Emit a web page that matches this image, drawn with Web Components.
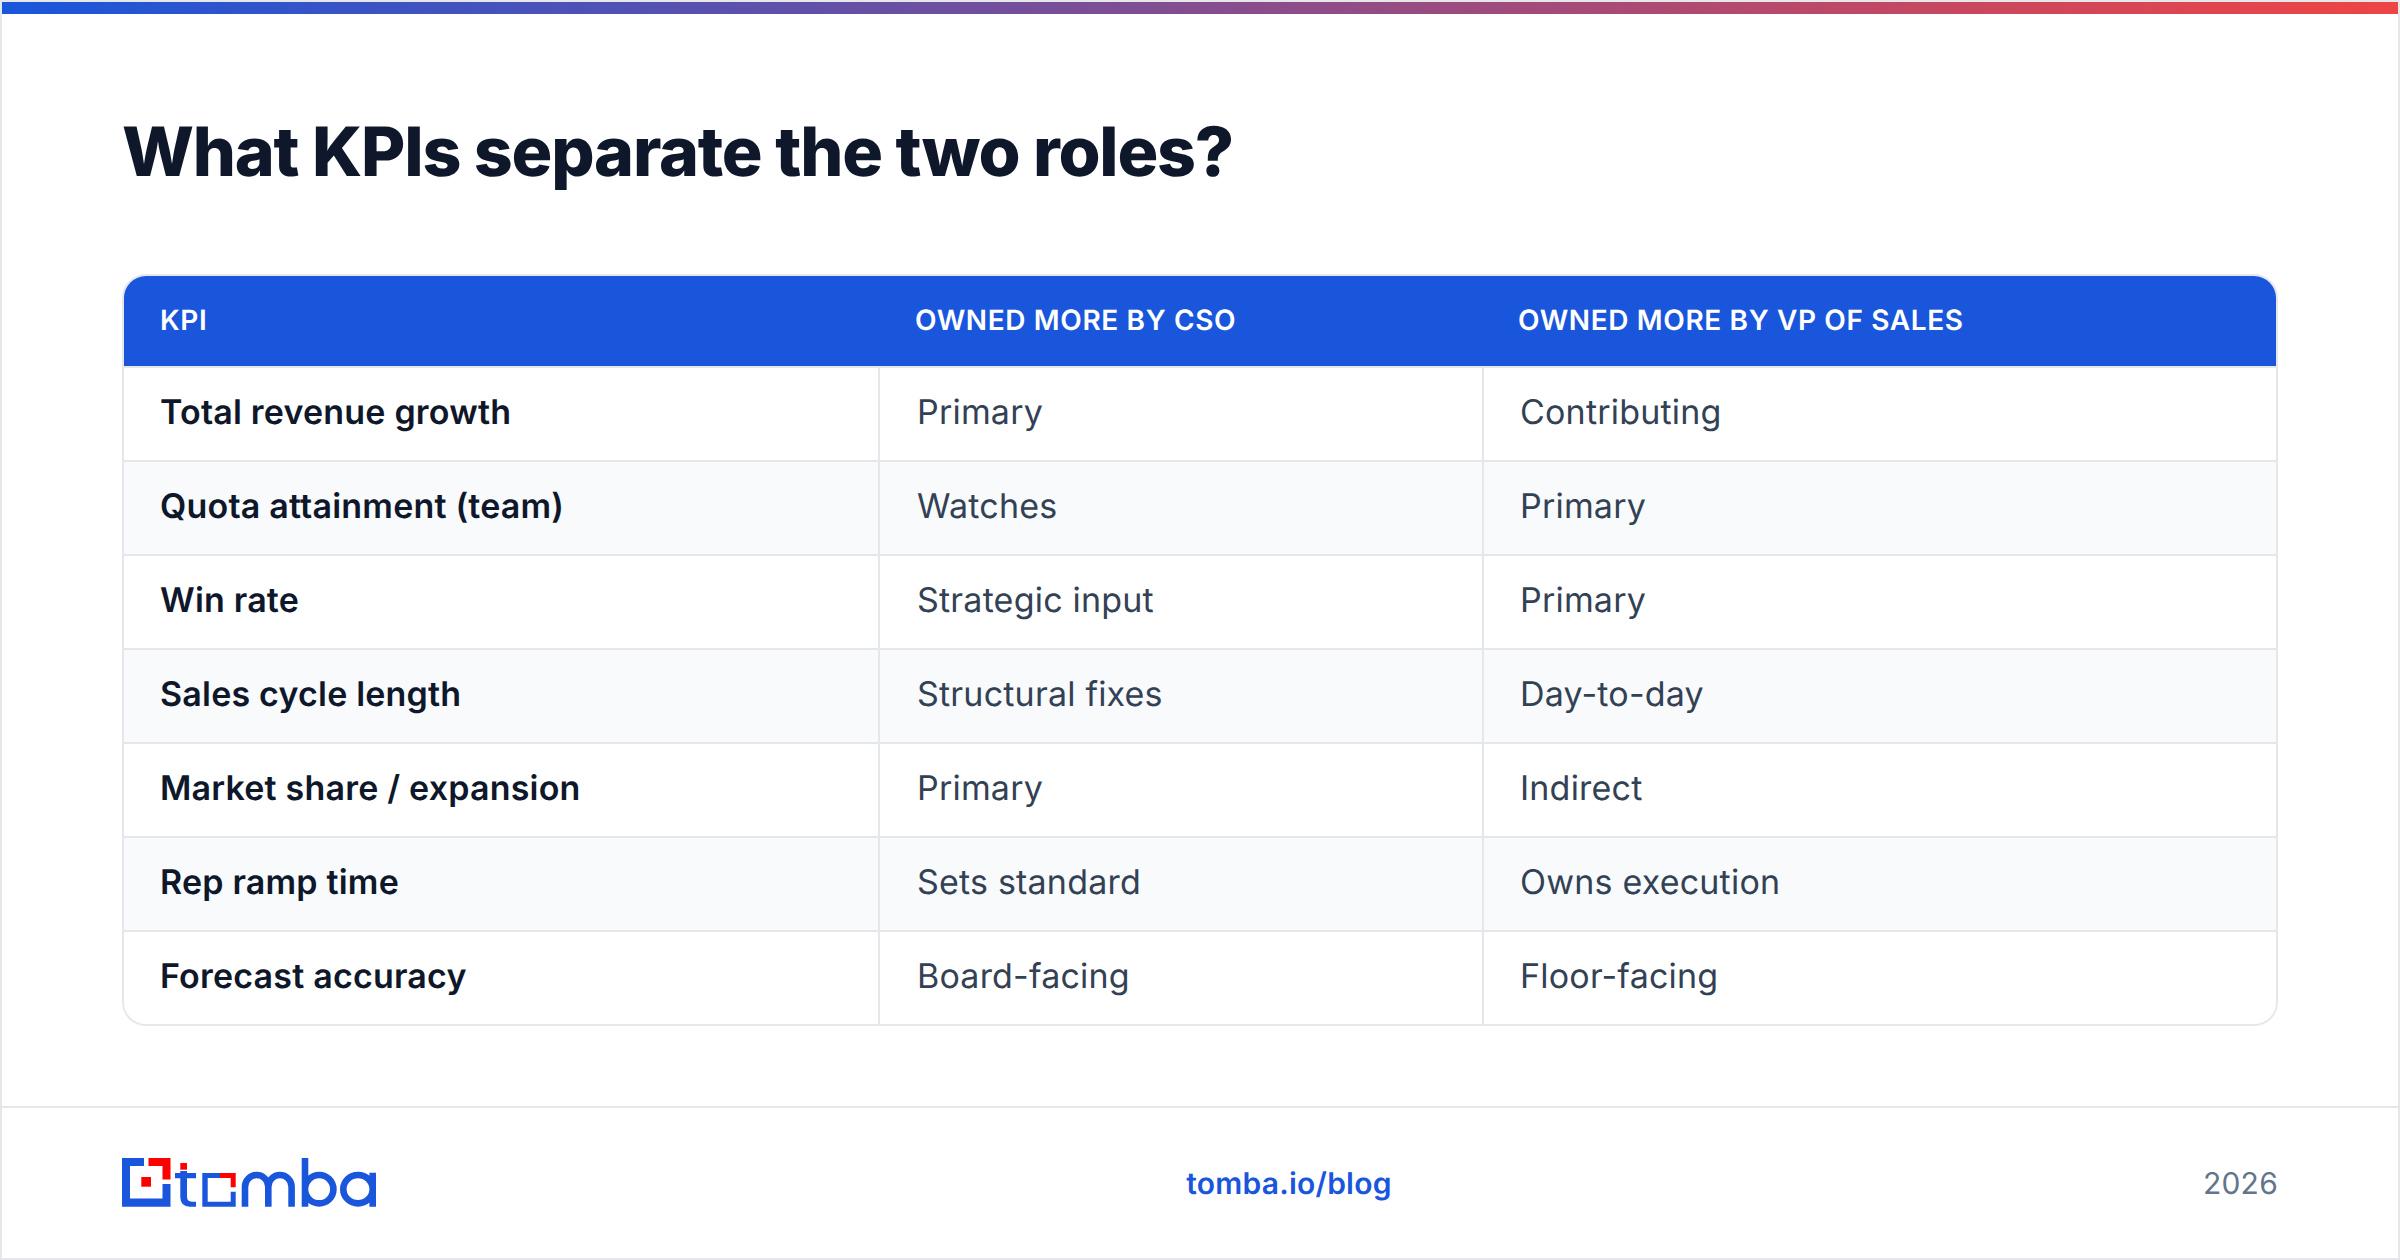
<!DOCTYPE html>
<html>
<head>
<meta charset="utf-8">
<title>KPIs</title>
<style>
	html, body { margin: 0; padding: 0; background: #fff; }
	body { font-family: Inter, "Liberation Sans", sans-serif; text-rendering: geometricPrecision; }
</style>
</head>
<body>

<kpi-slide>
	<h-title slot="title">What KPIs separate the two roles?</h-title>
	<kpi-table>
		<kpi-head><span>KPI</span><span>OWNED MORE BY CSO</span><span>OWNED MORE BY VP OF SALES</span></kpi-head>
		<kpi-row><span>Total revenue growth</span><span>Primary</span><span>Contributing</span></kpi-row>
		<kpi-row alt><span>Quota attainment (team)</span><span>Watches</span><span>Primary</span></kpi-row>
		<kpi-row><span>Win rate</span><span>Strategic input</span><span>Primary</span></kpi-row>
		<kpi-row alt><span>Sales cycle length</span><span>Structural fixes</span><span>Day-to-day</span></kpi-row>
		<kpi-row><span>Market share / expansion</span><span>Primary</span><span>Indirect</span></kpi-row>
		<kpi-row alt><span>Rep ramp time</span><span>Sets standard</span><span>Owns execution</span></kpi-row>
		<kpi-row><span>Forecast accuracy</span><span>Board-facing</span><span>Floor-facing</span></kpi-row>
	</kpi-table>
	<kpi-footer slot="footer" link="tomba.io/blog" year="2026"></kpi-footer>
</kpi-slide>

<script>
class KpiSlide extends HTMLElement {
	constructor(){
		super()
		this.attachShadow({mode: 'open'}).innerHTML = `
			<style>
				:host{
					display: flex;
					flex-direction: column;
					box-sizing: border-box;
					width: 2400px;
					height: 1260px;
					border: 2px solid #e5e7eb;
					background: #fff;
					overflow: hidden;
				}
				.bar{
					height: 12px;
					flex: none;
					background: linear-gradient(90deg, #1a56db, #ef4444);
				}
				main{
					flex: 1;
					display: flex;
					flex-direction: column;
					padding: 93px 120px 0;
				}
			</style>
			<div class="bar"></div>
			<main>
				<slot name="title"></slot>
				<slot></slot>
			</main>
			<slot name="footer"></slot>
		`
	}
}

class HTitle extends HTMLElement {
	constructor(){
		super()
		this.attachShadow({mode: 'open'}).innerHTML = `
			<style>
				:host{
					display: block;
					font-size: 68px;
					line-height: 90px;
					font-weight: 800;
					letter-spacing: -1.2px;
					color: #0f172a;
					margin-bottom: 77px;
				}
			</style>
			<slot></slot>
		`
	}
}

class KpiTable extends HTMLElement {
	constructor(){
		super()
		this.attachShadow({mode: 'open'}).innerHTML = `
			<style>
				:host{
					display: block;
					border: 2px solid #e5e7eb;
					border-radius: 24px;
					overflow: hidden;
				}
			</style>
			<slot></slot>
		`
	}
}

const COLS = '754px 604px 1fr'

class KpiHead extends HTMLElement {
	constructor(){
		super()
		this.attachShadow({mode: 'open'}).innerHTML = `
			<style>
				:host{
					display: grid;
					grid-template-columns: ${COLS};
					align-items: center;
					height: 90px;
					box-sizing: border-box;
					padding-bottom: 3px;
					background: #1a56db;
					color: #fff;
					font-size: 28px;
					font-weight: 600;
					letter-spacing: .62px;
				}
				::slotted(span){ padding-left: 36px; }
				::slotted(span:nth-child(2)){ padding-left: 37px; }
			</style>
			<slot></slot>
		`
	}
}

class KpiRow extends HTMLElement {
	constructor(){
		super()
		this.attachShadow({mode: 'open'}).innerHTML = `
			<style>
				:host{
					display: grid;
					grid-template-columns: ${COLS};
					height: 94px;
					box-sizing: border-box;
					border-top: 2px solid #e5e7eb;
					background: #fff;
					font-size: 34px;
					letter-spacing: .2px;
					color: #334155;
				}
				:host([alt]){ background: #f8fafc; }
				::slotted(span){
					display: flex;
					align-items: center;
					padding: 0 0 3px 36px;
				}
				::slotted(span:first-child){
					font-weight: 600;
					color: #0f172a;
				}
				::slotted(span:not(:first-child)){
					border-left: 2px solid #e5e7eb;
				}
				::slotted(span:nth-child(2)){ padding-left: 37px; }
			</style>
			<slot></slot>
		`
	}
}

class KpiFooter extends HTMLElement {
	constructor(){
		super()
		this.attachShadow({mode: 'open'}).innerHTML = `
			<style>
				:host{
					display: flex;
					justify-content: space-between;
					align-items: center;
					height: 152px;
					box-sizing: border-box;
					border-top: 2px solid #e5e7eb;
					padding: 0 120px;
				}
				svg{ display: block; margin-right: -3px; }
				span{
					font-size: 30px;
					letter-spacing: .23px;
					padding-top: 1px;
				}
				.link{
					font-weight: 600;
					color: #1a56db;
				}
				.year{
					color: #64748b;
				}
			</style>
			<svg width="256" height="50" viewBox="0 0 256 50">
				<g fill="#1a56db">
					<path d="M0 0H22V8H8V40.500H40.500V26H48.500V48.700H0Z"/>
					<path d="M80.300 15H98V20H85.700V43.700H108.700V33.700H113.700V48.700H80.300Z"/>
					<path d="M53 15H58.300V13H65V15H74V20.300H65V38.500Q65 43.700 70 43.700H74V48.700H68Q58.300 48.700 58.300 39V20.300H53Z"/>
				</g>
				<g fill="#ff0000">
					<path d="M26.500 0H48.500V21.500H40.500V8H26.500Z"/>
					<rect x="19.300" y="19" width="9.700" height="9.700"/>
					<rect x="58.300" y="5" width="6.700" height="6.700"/>
					<path d="M98 15H113.700V29.300H108.700V20H98Z"/>
				</g>
				<g fill="none" stroke="#1a56db" stroke-width="6.600">
					<path d="M123 48.700V28.700a11.650 11.650 0 0 1 23.300 0V48.700M146.300 28.700a11.650 11.650 0 0 1 23.300 0V48.700"/>
					<path d="M183 0V48.700M183 31.200a14.200 14.200 0 1 0 28.400 0a14.200 14.200 0 1 0-28.400 0"/>
					<path d="M250.700 14.700V48.700M250.700 31.200a14.700 14.200 0 1 1-29.400 0a14.700 14.200 0 1 1 29.400 0"/>
				</g>
			</svg>
			<span class="link">${this.getAttribute('link')}</span>
			<span class="year">${this.getAttribute('year')}</span>
		`
	}
}

customElements.define('kpi-slide', KpiSlide)
customElements.define('h-title', HTitle)
customElements.define('kpi-table', KpiTable)
customElements.define('kpi-head', KpiHead)
customElements.define('kpi-row', KpiRow)
customElements.define('kpi-footer', KpiFooter)
</script>
</body>
</html>
